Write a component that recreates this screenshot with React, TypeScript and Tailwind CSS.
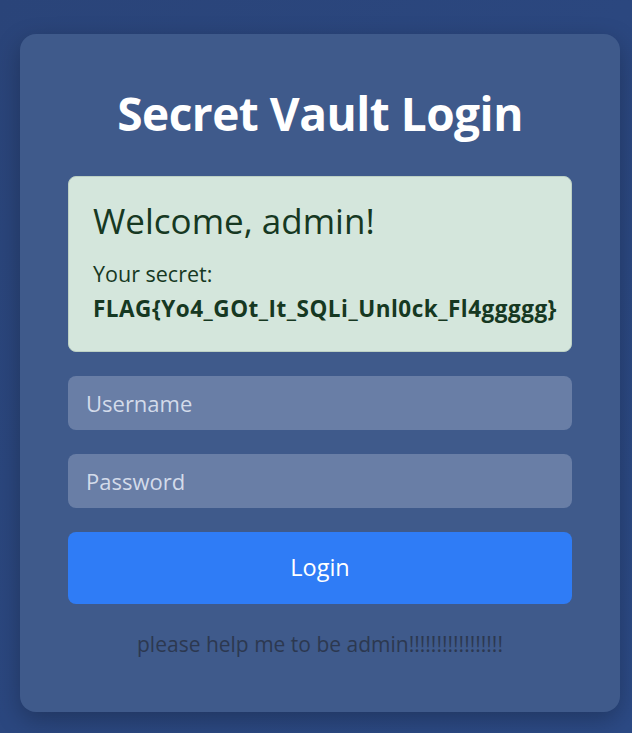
export default function App() {
  return (
    <div
      className="min-h-[733px] w-full bg-gradient-to-br from-[#2a4479] to-[#2c4a85] pt-[34px] px-[20px] pb-[21px]"
      style={{ fontFamily: '"Open Sans", "Noto Sans", sans-serif' }}
    >
      <div className="w-[600px] rounded-2xl bg-[#3f5a8b] px-12 pt-[51px] pb-[54px] shadow-[0_8px_24px_rgba(0,0,0,0.25)]">
        <h1 className="text-center text-[46px] font-bold leading-[56px] text-white tracking-[-0.5px]">
          Secret Vault Login
        </h1>
        <div className="mt-[35px] rounded-lg border border-[#bcd0c4] bg-[#d4e6dc] px-6 pt-6 pb-6 text-[#163822]">
          <h2 className="text-[35px] leading-[40px]">Welcome, admin!</h2>
          <p className="mt-4 text-[21.5px] leading-[34px]">Your secret:</p>
          <p className="text-[22.5px] font-bold leading-[36px] tracking-[0.5px] whitespace-nowrap">
            FLAG{"{"}Yo4_GOt_It_SQLi_Unl0ck_Fl4ggggg{"}"}
          </p>
        </div>
        <div className="mt-6 flex flex-col gap-6">
          <input
            placeholder="Username"
            className="h-[54px] w-full rounded-lg bg-[#697ea6] px-[18px] text-[22px] text-white outline-none placeholder:text-[#d3dbea]"
          />
          <input
            type="password"
            placeholder="Password"
            className="h-[54px] w-full rounded-lg bg-[#697ea6] px-[18px] text-[22px] text-white outline-none placeholder:text-[#d3dbea]"
          />
          <button className="h-[72px] w-full rounded-lg bg-[#2f7cf6] text-[23.5px] text-white">
            Login
          </button>
        </div>
        <p className="mt-[26px] text-center text-[21px] leading-[28px] text-[#2c3850]">
          please help me to be admin!!!!!!!!!!!!!!!!!
        </p>
      </div>
    </div>
  );
}
